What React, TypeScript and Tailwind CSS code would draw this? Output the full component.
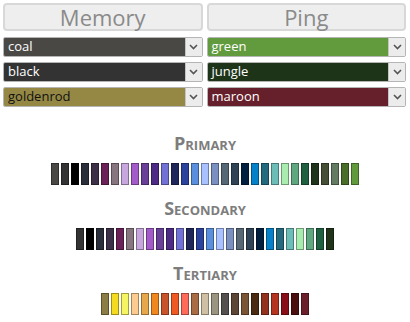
import React from 'react';

const primary = [
  '#4a4845', '#333333', '#000000', '#2a2d3a', '#3c2f48', '#6b2158', '#877680', '#c8a6de',
  '#a35bc9', '#6a3f9a', '#4c2a85', '#7272d6', '#1f275a', '#2c439e', '#5a8fdd', '#a9c2ff',
  '#7a90c0', '#566775', '#2f4357', '#01203f', '#0581c9', '#246a7f', '#6cbdb8', '#a9ecb0',
  '#5fa77e', '#1e6040', '#1f341b', '#444f36', '#627b62', '#4b6d2a', '#619a3d',
];

const secondary = primary.slice(1, 27);

const tertiary = [
  '#8b7d44', '#f5db1f', '#f4f560', '#fbcb8f', '#e6a84a', '#f0881f', '#c9542a', '#ef5a23',
  '#ff6b5a', '#a86d45', '#cfc0a5', '#9a9580', '#555050', '#5c4535', '#7a5535', '#4a2a10',
  '#92311e', '#b53420', '#8a0e1a', '#4a0e0e', '#6b1f2b',
];

const Chevron = () => (
  <svg width="9" height="6" viewBox="0 0 9 6" fill="none">
    <path d="M1 1l3.5 3.5L8 1" stroke="#555" strokeWidth="1.6" />
  </svg>
);

const Select = ({ label, bg, dark }: { label: string; bg: string; dark?: boolean }) => (
  <div className="flex h-[20px] rounded-[2px] border border-[#b5b5b5] overflow-hidden">
    <div
      className={`flex-1 flex items-center pl-[4px] text-[13px] ${dark ? 'text-[#111]' : 'text-white'}`}
      style={{ backgroundColor: bg }}
    >
      {label}
    </div>
    <div className="w-[17px] flex items-center justify-center bg-[#ececec] border-l border-[#c4c4c4]">
      <Chevron />
    </div>
  </div>
);

const Column = ({ title, selects }: { title: string; selects: { label: string; bg: string; dark?: boolean }[] }) => (
  <div className="flex flex-col">
    <button className="h-[28px] rounded-[4px] border-2 border-[#d8d8d8] bg-[#eeeeee] text-[22px] leading-none text-[#8a8a8a]">
      {title}
    </button>
    <div className="flex flex-col gap-[5px] mt-[6px]">
      {selects.map((s) => (
        <Select key={s.label} {...s} />
      ))}
    </div>
  </div>
);

const Palette = ({ title, colors }: { title: string; colors: string[] }) => (
  <div className="flex flex-col items-center">
    <div className="text-[18px] font-bold leading-none text-[#7d7d7d] [font-variant-caps:small-caps]">{title}</div>
    <div className="flex gap-[2px] mt-[11px]">
      {colors.map((c, i) => (
        <div key={i} className="w-[8px] h-[22px] border border-black/35" style={{ backgroundColor: c }} />
      ))}
    </div>
  </div>
);

export default function App() {
  return (
    <div className="w-[410px] h-[322px] bg-white font-['Open_Sans',sans-serif]">
      <div className="grid grid-cols-2 gap-x-[4px] pl-[3px] pr-[4px] pt-[3px]">
        <Column
          title="Memory"
          selects={[
            { label: 'coal', bg: '#4a4845' },
            { label: 'black', bg: '#333333' },
            { label: 'goldenrod', bg: '#958845', dark: true },
          ]}
        />
        <Column
          title="Ping"
          selects={[
            { label: 'green', bg: '#629b3e' },
            { label: 'jungle', bg: '#1e3419' },
            { label: 'maroon', bg: '#66202b' },
          ]}
        />
      </div>
      <div className="flex flex-col gap-[14px] mt-[27px]">
        <Palette title="Primary" colors={primary} />
        <Palette title="Secondary" colors={secondary} />
        <Palette title="Tertiary" colors={tertiary} />
      </div>
    </div>
  );
}
